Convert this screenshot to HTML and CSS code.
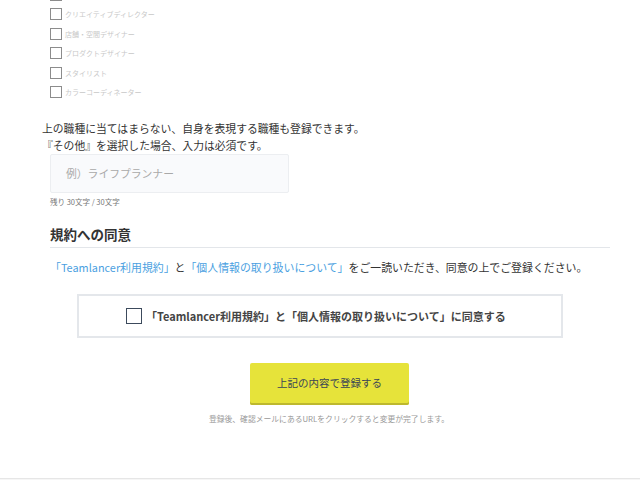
FILE: index.html
```html
<!DOCTYPE html>
<html lang="ja">
<head>
<meta charset="utf-8">
<link rel="stylesheet" href="styles.css">
</head>
<body>
<div class="page">
  <ul class="jobs">
    <li class="job"><span class="box"></span></li>
    <li class="job"><span class="box"></span><span class="job-label">クリエイティブディレクター</span></li>
    <li class="job"><span class="box"></span><span class="job-label">店舗・空間デザイナー</span></li>
    <li class="job"><span class="box"></span><span class="job-label">プロダクトデザイナー</span></li>
    <li class="job"><span class="box"></span><span class="job-label">スタイリスト</span></li>
    <li class="job"><span class="box"></span><span class="job-label">カラーコーディネーター</span></li>
  </ul>
  <p class="note-other">上の職種に当てはまらない、自身を表現する職種も登録できます。<br>『その他』を選択した場合、入力は必須です。</p>
  <div class="field"><span class="placeholder">例）ライフプランナー</span></div>
  <div class="counter">残り 30文字 / 30文字</div>

  <h2 class="section-title">規約への同意</h2>
  <p class="terms-text"><a class="link">「Teamlancer利用規約」</a>と<a class="link">「個人情報の取り扱いについて」</a>をご一読いただき、同意の上でご登録ください。</p>
  <div class="agree">
    <span class="agree-box"></span>
    <span class="agree-label">「Teamlancer利用規約」と「個人情報の取り扱いについて」に同意する</span>
  </div>
  <div class="submit-wrap"><button class="submit">上記の内容で登録する</button></div>
  <p class="after-note">登録後、確認メールにあるURLをクリックすると変更が完了します。</p>
</div>
<footer class="footer"></footer>
</body>
</html>
```
FILE: styles.css
```css
html, body {
  margin: 0;
  padding: 0;
  background: #fff;
  font-family: "Noto Sans CJK JP", "Noto Sans", sans-serif;
  color: #333;
  overflow: hidden;
}
.page {
  width: 640px;
}
.jobs {
  list-style: none;
  margin: -11.5px 0 0 0;
  padding: 0 0 0 50px;
  display: flex;
  flex-direction: column;
  gap: 7.5px;
}
.job {
  display: flex;
  align-items: center;
  height: 12px;
  gap: 3px;
}
.box {
  width: 12px;
  height: 12px;
  box-sizing: border-box;
  border: 1.5px solid #8c8c8c;
  background: #fff;
}
.job-label {
  font-size: 7px;
  line-height: 12px;
  color: #c8c8c8;
}
.note-other {
  margin: 21.5px 0 0 42px;
  font-size: 10.8px;
  line-height: 17px;
  color: #333;
}
.field {
  margin: 0 0 0 50px;
  width: 239px;
  height: 39px;
  box-sizing: border-box;
  border: 1px solid #eceef1;
  border-radius: 2px;
  background: #f9fafc;
  display: flex;
  align-items: center;
  padding-left: 15px;
}
.placeholder {
  font-size: 10.8px;
  color: #a9a9a9;
}
.counter {
  margin: 4px 0 0 50px;
  font-size: 7.5px;
  line-height: 10px;
  color: #777;
}
.section-title {
  margin: 18px 0 0 50px;
  width: 560px;
  font-size: 13.5px;
  line-height: 18px;
  font-weight: bold;
  color: #333;
  padding-bottom: 4px;
  border-bottom: 1px solid #e3e6ea;
}
.terms-text {
  margin: 11px 0 0 50px;
  font-size: 10.9px;
  line-height: 16px;
  color: #333;
}
.link {
  color: #4b9fe1;
}
.agree {
  margin: 19px 0 0 77px;
  width: 486px;
  height: 44px;
  box-sizing: border-box;
  border: 2px solid #e4e7eb;
  display: flex;
  align-items: center;
  padding-left: 47px;
  gap: 4px;
}
.agree-box {
  width: 16px;
  height: 16px;
  box-sizing: border-box;
  border: 1.5px solid #3c4a5c;
  flex: none;
}
.agree-label {
  font-size: 11px;
  font-weight: bold;
  color: #444;
}
.submit-wrap {
  margin: 25px 0 0 250px;
}
.submit {
  width: 159px;
  height: 42px;
  border: none;
  border-radius: 2px;
  background: #e6e33a;
  box-shadow: inset 0 -2px 0 #bdb82e;
  font-family: inherit;
  font-size: 10.5px;
  color: #3a4556;
  padding: 0 0 2px 0;
}
.after-note {
  margin: 9px 0 0 0;
  padding-left: 18px;
  text-align: center;
  font-size: 7.8px;
  line-height: 10px;
  color: #999;
}
.footer {
  margin-top: 54px;
  height: 20px;
  background: #f6f6f6;
  border-top: 1px solid #e6e6e6;
}
```
